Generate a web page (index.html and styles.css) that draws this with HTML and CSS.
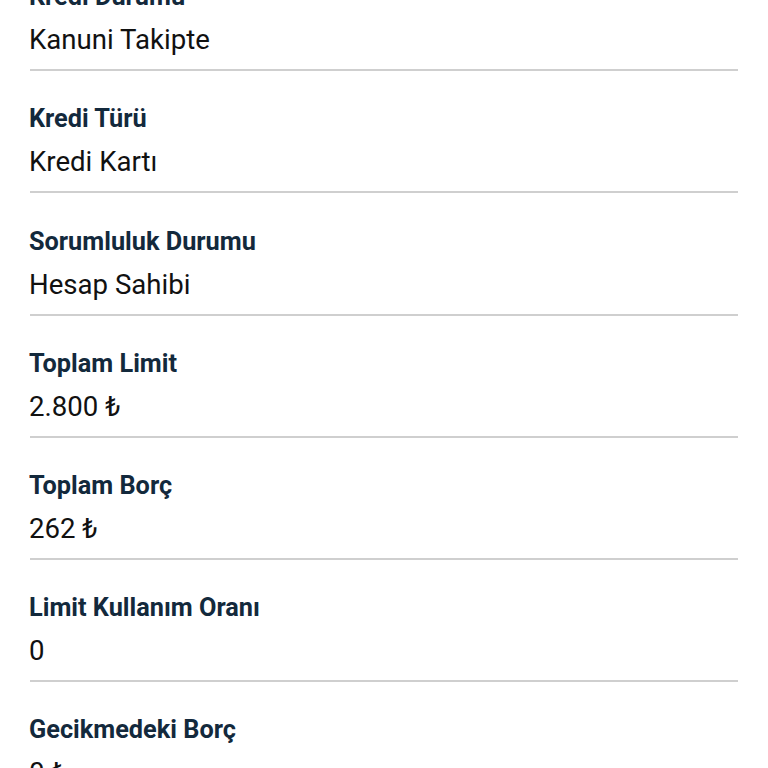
FILE: index.html
```html
<!DOCTYPE html>
<html lang="tr">
<head>
<meta charset="utf-8">
<title>Kredi Detayı</title>
<link rel="stylesheet" href="styles.css">
</head>
<body>
<main class="details">
  <div class="row row-first">
    <div class="label">Kredi Durumu</div>
    <div class="value">Kanuni Takipte</div>
  </div>
  <div class="row">
    <div class="label">Kredi Türü</div>
    <div class="value">Kredi Kartı</div>
  </div>
  <div class="row">
    <div class="label">Sorumluluk Durumu</div>
    <div class="value">Hesap Sahibi</div>
  </div>
  <div class="row">
    <div class="label">Toplam Limit</div>
    <div class="value">2.800 ₺</div>
  </div>
  <div class="row">
    <div class="label">Toplam Borç</div>
    <div class="value">262 ₺</div>
  </div>
  <div class="row">
    <div class="label">Limit Kullanım Oranı</div>
    <div class="value">0</div>
  </div>
  <div class="row">
    <div class="label">Gecikmedeki Borç</div>
    <div class="value">0 ₺</div>
  </div>
</main>
</body>
</html>
```
FILE: styles.css
```css
html, body {
  margin: 0;
  padding: 0;
  background: #ffffff;
}

body {
  font-family: Roboto, "Noto Sans", "Liberation Sans", sans-serif;
  overflow: hidden;
  height: 768px;
}

.details {
  margin: -51px 30px 0 30px;
  display: flex;
  flex-direction: column;
}

.row {
  padding: 34.2px 0 13px 0;
  border-bottom: 2px solid #cfcfcf;
  display: flex;
  flex-direction: column;
  gap: 13px;
}

.label,
.value {
  margin-left: -1px;
}

.label {
  font-size: 25.3px;
  line-height: 28px;
  font-weight: 700;
  color: #13293c;
}

.value {
  font-size: 27.6px;
  line-height: 32px;
  font-weight: 400;
  color: #111111;
}
```
